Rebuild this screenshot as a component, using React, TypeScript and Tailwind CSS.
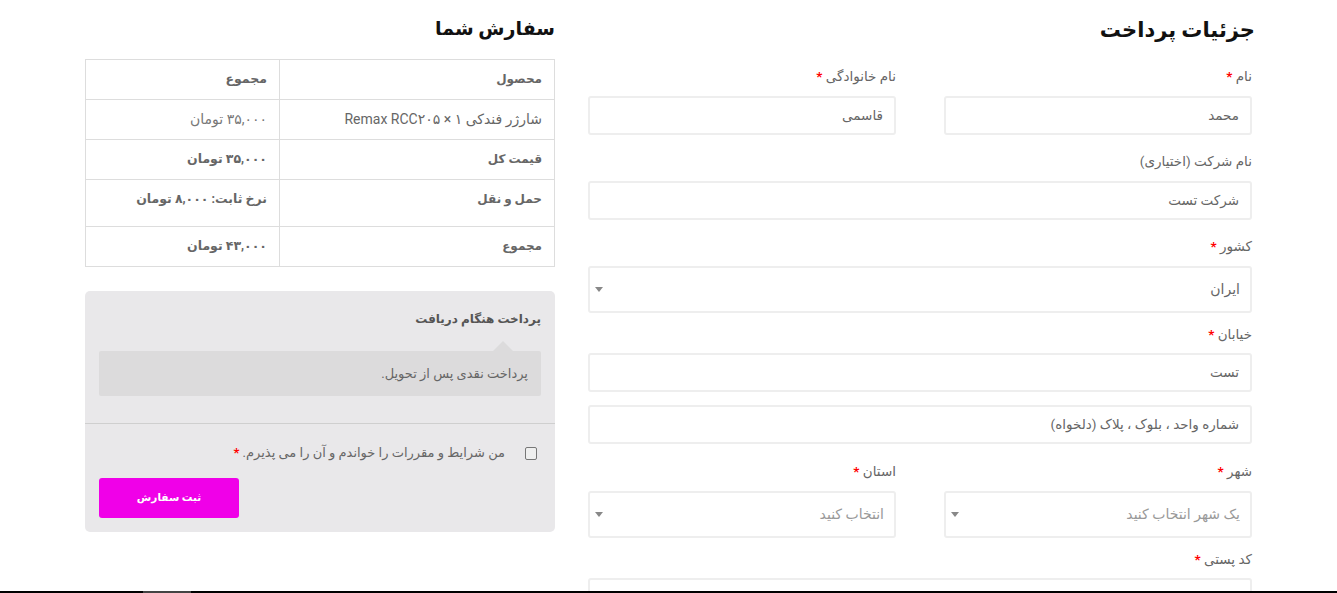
import type { ReactNode } from 'react'

const font = "font-['Roboto','DejaVu_Sans',sans-serif]"

function Req() {
  return <span className="text-[#f00] font-bold"> *</span>
}

function Label({ text, req, mt }: { text: string; req?: boolean; mt: string }) {
  return (
    <div className={`text-[13.5px] leading-[21px] text-[#666] h-[20px] ${mt}`}>
      {text}
      {req && <Req />}
    </div>
  )
}

function Input({ value, mt = 'mt-[10px]' }: { value: string; mt?: string }) {
  return (
    <div className={`h-[39px] border-2 border-[#eeeeee] rounded-[3px] px-[11px] flex items-center text-[13.5px] text-[#666] bg-white ${mt}`}>
      {value}
    </div>
  )
}

function Select({ value, muted }: { value: string; muted?: boolean }) {
  return (
    <div className={`h-[47px] mt-[10px] border-2 border-[#eeeeee] rounded-[3px] pr-[10px] pl-[5px] flex items-center justify-between text-[14px] bg-white ${muted ? 'text-[#999]' : 'text-[#666]'}`}>
      <span>{value}</span>
      <span className="w-0 h-0 border-x-[4px] border-x-transparent border-t-[5px] border-t-[#888]" />
    </div>
  )
}

function Row({ a, b, tall, last, plain }: { a: string; b: ReactNode; tall?: boolean; last?: boolean; plain?: boolean }) {
  return (
    <div className={`flex ${tall ? 'h-[47px]' : last ? 'h-[39px]' : 'h-[40px]'} ${last ? '' : 'border-b border-[#dddddd]'}`}>
      <div className={`w-[275px] border-l border-[#dddddd] pr-[12px] pt-[9px] leading-[20px] text-[#666] ${plain ? 'text-[14px] font-normal' : 'text-[12px] font-bold'}`}>{a}</div>
      <div className={`flex-1 pr-[12px] pt-[9px] leading-[20px] ${plain ? 'text-[14px] font-normal text-[#777]' : 'text-[12.5px] font-bold text-[#666]'}`}>{b}</div>
    </div>
  )
}

export default function App() {
  return (
    <div dir="rtl" className={`${font} h-[593px] w-[1337px] overflow-hidden flex flex-col bg-white`}>
      <div className="flex-1 overflow-hidden flex gap-[33px] px-[85px]">
        {/* billing */}
        <div className="w-[664px] shrink-0">
          <h3 className="text-[21px] leading-[30px] font-bold text-[#111] mt-[15px] -mr-[3px]">جزئیات پرداخت</h3>
          <div className="grid grid-cols-2 gap-x-[48px] mt-[21px]">
            <div>
              <Label text="نام" req mt="" />
              <Input value="محمد" />
            </div>
            <div>
              <Label text="نام خانوادگی" req mt="" />
              <Input value="قاسمی" />
            </div>
          </div>
          <Label text="نام شرکت (اختیاری)" mt="mt-[16px]" />
          <Input value="شرکت تست" />
          <Label text="کشور" req mt="mt-[16px]" />
          <Select value="ایران" />
          <Label text="خیابان" req mt="mt-[11px]" />
          <Input value="تست" mt="mt-[9px]" />
          <Input value="شماره واحد ، بلوک ، پلاک (دلخواه)" mt="mt-[13px]" />
          <div className="grid grid-cols-2 gap-x-[48px] mt-[17px]">
            <div>
              <Label text="شهر" req mt="" />
              <Select value="یک شهر انتخاب کنید" muted />
            </div>
            <div>
              <Label text="استان" req mt="" />
              <Select value="انتخاب کنید" muted />
            </div>
          </div>
          <Label text="کد پستی" req mt="mt-[11px]" />
          <Input value="" mt="mt-[9px]" />
        </div>

        {/* order */}
        <div className="w-[470px] shrink-0">
          <h3 className="text-[19px] leading-[30px] font-bold text-[#111] mt-[14px]">سفارش شما</h3>
          <div className="mt-[15px] border border-[#dddddd]">
            <Row a="محصول" b="مجموع" />
            <Row a="شارژر فندکی ۱ × Remax RCC۲۰۵" b="۳۵,۰۰۰ تومان" plain />
            <Row a="قیمت کل" b="۳۵,۰۰۰ تومان" />
            <Row a="حمل و نقل" b="نرخ ثابت: ۸,۰۰۰ تومان" tall />
            <Row a="مجموع" b="۴۳,۰۰۰ تومان" last />
          </div>

          <div className="mt-[24px] bg-[#e9e8ea] rounded-[5px] h-[241px]">
            <div className="px-[14px] pt-[16px]">
              <div className="text-[12px] leading-[24px] font-bold text-[#555]">پرداخت هنگام دریافت</div>
              <div className="relative mt-[20px] h-[45px] bg-[#dcdbdc] rounded-[2px] px-[13px] flex items-center text-[13px] text-[#666]">
                <span className="absolute -top-[10px] right-[28px] w-0 h-0 border-x-[10px] border-x-transparent border-b-[10px] border-b-[#dcdbdc]" />
                پرداخت نقدی پس از تحویل.
              </div>
            </div>
            <div className="mt-[27px] border-t border-[#cfcfcf] px-[14px] pt-[19px]">
              <div className="flex items-center h-[20px] text-[13px] text-[#666]">
                <input type="checkbox" className="appearance-none w-[12px] h-[13px] mr-[4px] ml-[20px] border border-[#777] rounded-[2px] bg-[#efefef]" />
                <span>
                  من شرایط و مقررات را خواندم و آن را می پذیرم.
                  <Req />
                </span>
              </div>
              <button className="mt-[15px] mr-auto w-[140px] h-[40px] bg-[#f000e8] rounded-[3px] text-white text-[10.5px] font-bold block">ثبت سفارش</button>
            </div>
          </div>
        </div>
      </div>
      <div dir="ltr" className="h-[2px] bg-black shrink-0">
        <div className="ml-[143px] w-[48px] h-[2px] bg-[#444]" />
      </div>
    </div>
  )
}
